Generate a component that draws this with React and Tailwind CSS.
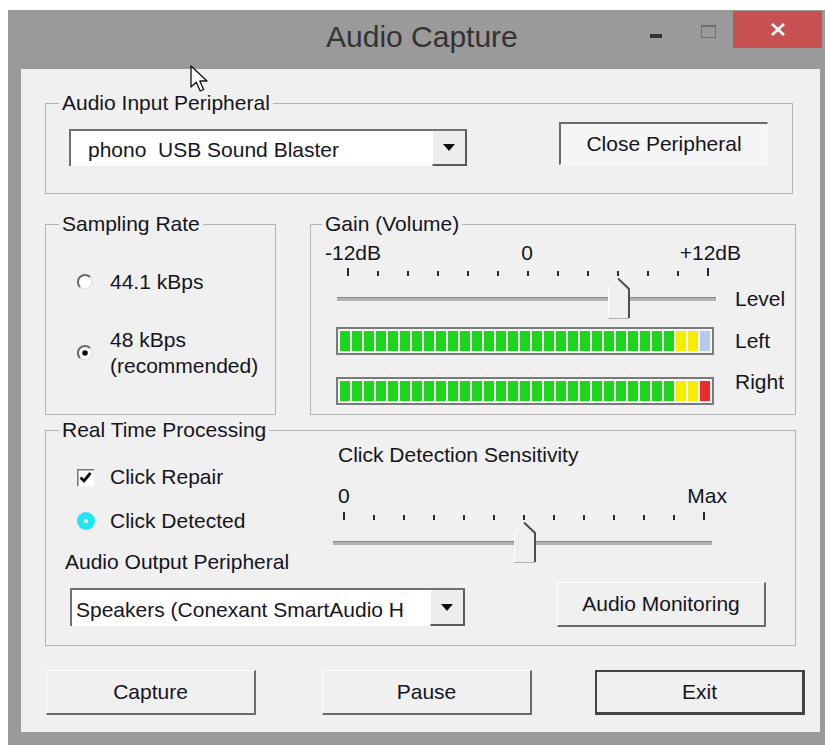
import React from 'react';

const TICKS = Array.from({ length: 13 }, (_, i) => i);

const raised =
  'bg-[#f0f0f0] border-t border-l border-t-white border-l-white border-r-2 border-b-2 border-r-[#6b6b6b] border-b-[#6b6b6b]';

function Group({ title, className, legendClass = 'ml-[13px]', children }) {
  return (
    <fieldset className={`min-w-0 border border-[#b4b4b4] ${className}`}>
      <legend className={`${legendClass} px-[3px] text-[21px] leading-[24px]`}>{title}</legend>
      {children}
    </fieldset>
  );
}

function Combo({ text, className, textClass }) {
  return (
    <div className={`flex bg-white border-t-2 border-l-2 border-[#707070] ${className}`}>
      <span className={`flex-1 flex items-center whitespace-pre text-[21px] ${textClass}`}>{text}</span>
      <span className="w-[35px] flex items-center justify-center bg-[#ededed] border-l border-l-white border-r-2 border-b-2 border-r-[#5a5a5a] border-b-[#5a5a5a]">
        <svg width="12" height="7" viewBox="0 0 12 7">
          <path d="M0 0h12L6 7z" fill="#111" />
        </svg>
      </span>
    </div>
  );
}

function Radio({ checked }) {
  return (
    <svg width="18" height="18" viewBox="0 0 18 18" className="shrink-0">
      <circle cx="9" cy="9" r="7" fill="#fff" stroke="#e2e2e2" strokeWidth="1.4" />
      <path d="M4 14A7 7 0 0 1 14 4" fill="none" stroke="#6a6a6a" strokeWidth="2" />
      {checked && <circle cx="9" cy="9" r="2.8" fill="#111" />}
    </svg>
  );
}

function Thumb({ left }) {
  return (
    <svg width="22" height="41" viewBox="0 0 22 41" className="absolute top-0" style={{ left }}>
      <path d="M0 10L10 0L21 11V41H0Z" fill="#efefef" />
      <path d="M0.5 41V10L10 0.5" fill="none" stroke="#fff" />
      <path d="M10 0.5L21 11V40" fill="none" stroke="#4e4e4e" strokeWidth="2" />
      <path d="M0 40.5H21" stroke="#b0b0b0" />
    </svg>
  );
}

// ticks on top, track below; "at" is the tick index where the thumb sits
function Slider({ at, label, className }) {
  return (
    <div className={className}>
      <div className="flex items-end gap-[28px] pl-[10px] h-[8px]">
        {TICKS.map((i) => (
          <span key={i} className={`w-[2px] bg-[#2a2a2a] ${i === 0 || i === 12 ? 'h-[8px]' : 'h-[5px]'}`} />
        ))}
      </div>
      <div className="flex items-center mt-[2px]">
        <div className="relative w-[379px] h-[41px] flex items-center">
          <div className="w-full h-[4px] bg-[#b2b2b2] border-t border-[#8a8a8a]" />
          <Thumb left={11 + at * 30 - 10} />
        </div>
        {label && <span className="ml-[19px] text-[21px] leading-[24px]">{label}</span>}
      </div>
    </div>
  );
}

function Meter({ last }) {
  const segs = Array.from({ length: 31 }, (_, i) =>
    i < 28 ? 'bg-[#1ed51e]' : i < 30 ? 'bg-[#f6ee00]' : last
  );
  return (
    <div className="flex gap-[2px] w-[378px] h-[28px] p-[2px] border-2 border-[#7a7a7a] bg-[#f6f6f6]">
      {segs.map((c, i) => (
        <span key={i} className={`w-[10px] h-full ${c}`} />
      ))}
    </div>
  );
}

function TitleBar() {
  return (
    <div className="h-[59px] flex items-start">
      <span className="ml-[318px] mt-[10px] text-[30px] leading-[34px] text-[#333]">Audio Capture</span>
      <div className="ml-auto mr-[3px] flex items-start">
        <span className="mt-[24px] w-[12px] h-[4px] bg-[#333]" />
        <span className="ml-[39px] mt-[15px] w-[15px] h-[13px] border border-[#6f6f6f] border-t-2" />
        <span className="ml-[17px] mt-[1px] w-[89px] h-[37px] bg-[#c75050] flex items-center justify-center">
          <svg width="14" height="13" viewBox="0 0 14 13">
            <path d="M1 1L13 12M13 1L1 12" stroke="#fff" strokeWidth="2.6" />
          </svg>
        </span>
      </div>
    </div>
  );
}

export default function App() {
  return (
    <div className="relative w-[825px] h-[745px] overflow-hidden bg-white pt-[10px] pl-[8px] font-['Liberation_Sans',Arial,sans-serif] text-[#15151c]">
      <div className="w-[817px] h-[735px] bg-[#9a9a9a] flex flex-col">
        <TitleBar />
        <div className="ml-[13px] w-[799px] h-[663px] bg-[#f0f0f0] pl-[24px] flex flex-col">
          <Group title="Audio Input Peripheral" className="mt-[22px] w-[748px] h-[103px]">
            <div className="flex items-start">
              <Combo
                text="phono  USB Sound Blaster"
                className="mt-[14px] ml-[23px] w-[398px] h-[37px]"
                textClass="pl-[17px] pt-[3px]"
              />
              <button className="ml-auto mr-[24px] mt-[7px] w-[209px] h-[43px] text-[21px] bg-[#f5f5f5] border-t-2 border-l-2 border-t-[#6a6a6a] border-l-[#6a6a6a] border-r border-b border-r-[#fafafa] border-b-[#fafafa]">
                Close Peripheral
              </button>
            </div>
          </Group>

          <div className="mt-[18px] flex items-start">
            <Group title="Sampling Rate" className="w-[231px] h-[203px]">
              <div className="mt-[33px] h-[26px] flex items-center pl-[30px]">
                <Radio />
                <span className="ml-[16px] text-[21px] leading-[26px]">44.1 kBps</span>
              </div>
              <div className="mt-[32px] flex items-center pl-[30px]">
                <Radio checked />
                <span className="ml-[16px] text-[21px] leading-[26px]">
                  48 kBps
                  <br />
                  (recommended)
                </span>
              </div>
            </Group>

            <Group title="Gain (Volume)" legendClass="ml-[11px]" className="ml-[34px] w-[486px] h-[203px]">
              <div className="mt-[6px] flex pl-[14px] text-[21px] leading-[22px]">
                <span className="w-[182px]">-12dB</span>
                <span className="w-[40px] text-center">0</span>
                <span className="w-[194px] text-right">+12dB</span>
              </div>
              <Slider at={9} label="Level" className="mt-[4px] ml-[26px]" />
              <div className="mt-[8px] ml-[25px] flex items-center">
                <Meter last="bg-[#b8c8ee]" />
                <span className="ml-[21px] text-[21px] leading-[24px]">Left</span>
              </div>
              <div className="mt-[22px] ml-[25px] flex items-start">
                <Meter last="bg-[#ee2a2a]" />
                <span className="ml-[21px] -mt-[7px] text-[21px] leading-[24px]">Right</span>
              </div>
            </Group>
          </div>

          <Group title="Real Time Processing" className="mt-[3px] w-[751px] h-[228px]">
            <div className="flex items-start">
              <div className="w-[287px] flex flex-col text-[21px] leading-[24px]">
                <div className="mt-[23px] flex items-center pl-[31px]">
                  <svg width="17" height="17" viewBox="0 0 17 17" className="shrink-0">
                    <rect x="0" y="0" width="17" height="17" fill="#fff" />
                    <path d="M0.8 17V0.8H17" fill="none" stroke="#7a7a7a" strokeWidth="1.6" />
                    <path d="M3.5 8.5L7 12L13.5 4" fill="none" stroke="#111" strokeWidth="2.8" />
                  </svg>
                  <span className="ml-[16px]">Click Repair</span>
                </div>
                <div className="mt-[20px] flex items-center pl-[31px]">
                  <span className="w-[18px] h-[18px] rounded-full bg-[#1fe6f4] flex items-center justify-center shrink-0">
                    <span className="w-[4px] h-[4px] rounded-full bg-white" />
                  </span>
                  <span className="ml-[15px]">Click Detected</span>
                </div>
                <span className="mt-[17px] pl-[19px]">Audio Output Peripheral</span>
              </div>

              <div className="flex flex-col text-[21px] leading-[24px]">
                <span className="mt-[1px] pl-[5px]">Click Detection Sensitivity</span>
                <div className="mt-[17px] pl-[5px] w-[394px] flex justify-between">
                  <span>0</span>
                  <span>Max</span>
                </div>
                <Slider at={6} className="mt-[4px]" />
              </div>
            </div>

            <div className="mt-[8px] flex items-start">
              <Combo
                text="Speakers (Conexant SmartAudio H"
                className="mt-[6px] ml-[24px] w-[395px] h-[38px]"
                textClass="pl-[4px] pt-[3px]"
              />
              <button className={`ml-[92px] w-[209px] h-[45px] text-[21px] ${raised}`}>Audio Monitoring</button>
            </div>
          </Group>

          <div className="mt-[24px] ml-[1px] flex text-[21px]">
            <button className={`w-[210px] h-[45px] ${raised}`}>Capture</button>
            <button className={`ml-[66px] w-[210px] h-[45px] ${raised}`}>Pause</button>
            <button className="ml-[63px] w-[210px] h-[45px] bg-[#f0f0f0] border-2 border-[#454545] border-r-[3px] border-b-[3px]">
              Exit
            </button>
          </div>
        </div>
      </div>

      {/* mouse pointer resting over the dialog */}
      <svg width="22" height="28" viewBox="0 0 22 28" className="absolute left-[190px] top-[65px]">
        <path
          d="M1 1V22L6.3 17.2L10.2 26L13.6 24.5L9.8 16H17Z"
          fill="#fff"
          stroke="#111"
          strokeWidth="1.3"
          strokeLinejoin="round"
        />
      </svg>
    </div>
  );
}
